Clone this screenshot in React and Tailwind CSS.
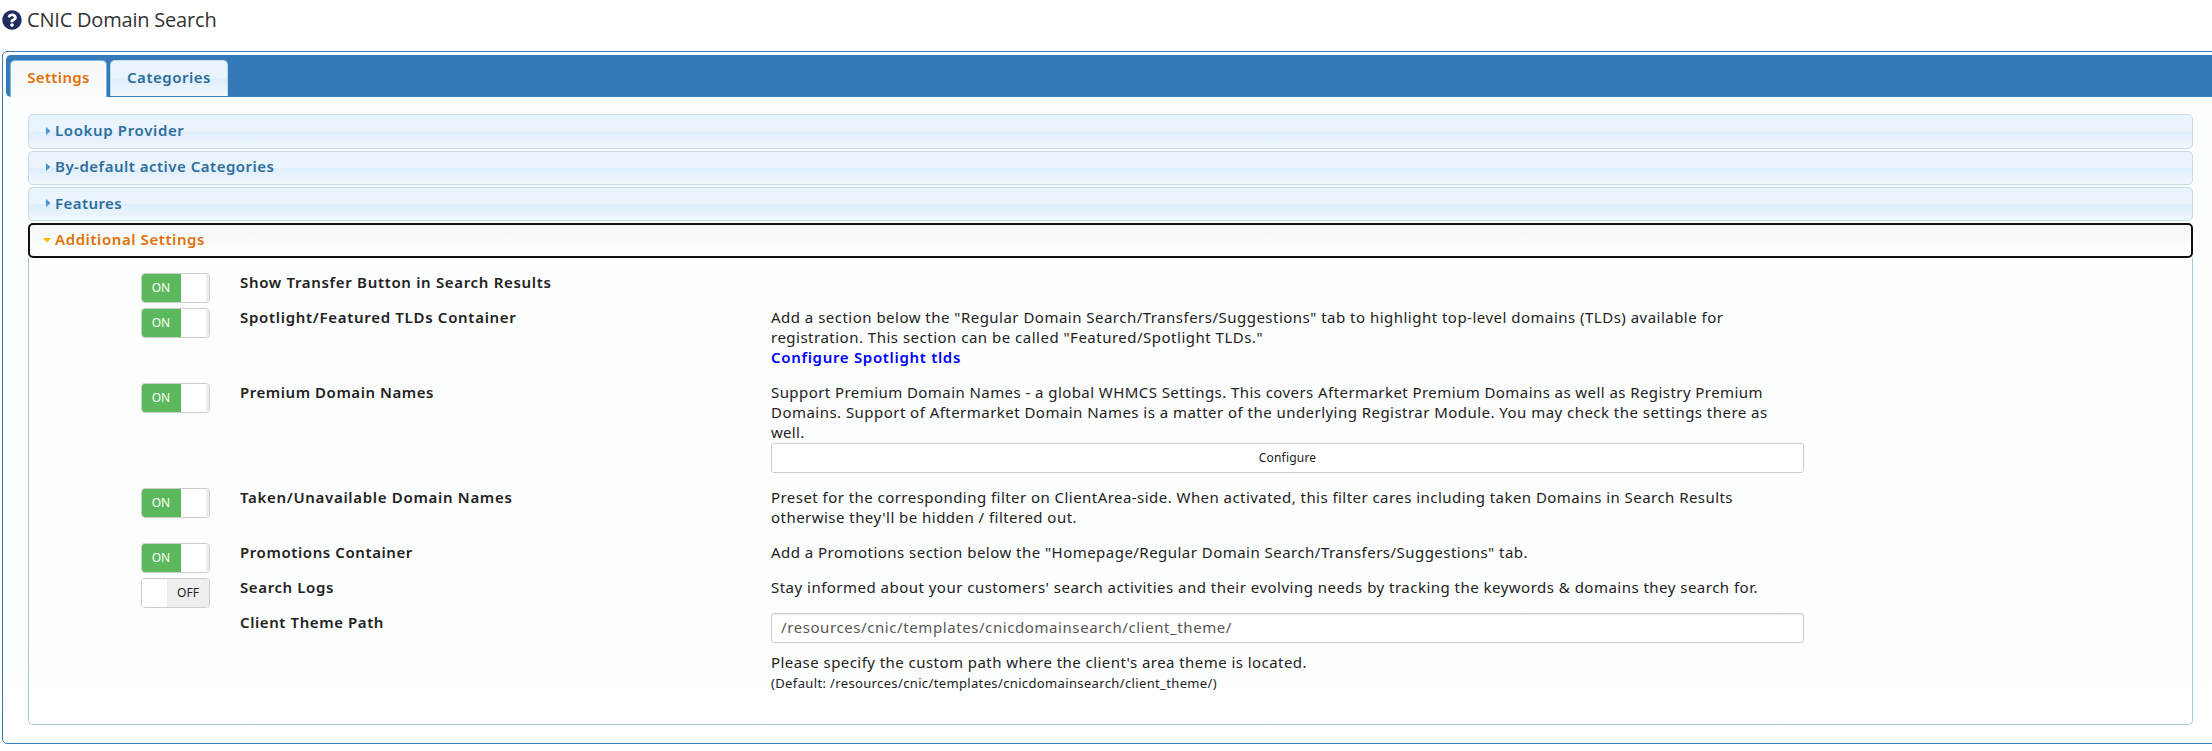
import React from "react";
import { FaQuestionCircle } from "react-icons/fa";

const sections = [
  { title: "Lookup Provider", tracking: "tracking-[0.64px] pb-0.5", box: "h-[35px]" },
  { title: "By-default active Categories", tracking: "tracking-[0.5px] pb-0.5", box: "mt-0.5 h-[34px]" },
  { title: "Features", tracking: "tracking-[0.42px]", box: "mt-0.5 h-[34px]" },
];

const boldText = "text-[15px] leading-5 font-semibold";

function Toggle({ on }) {
  return (
    <div className="flex h-[30px] w-[69px] overflow-hidden rounded border border-[#ccc] bg-white text-xs">
      {on ? (
        <>
          <span className="flex w-[39px] items-center justify-center bg-[#5cb85c] pl-px pr-0.5 text-white">ON</span>
          <span className="w-[25px] bg-white" />
          <span className="flex-1 bg-[#eee]" />
        </>
      ) : (
        <>
          <span className="w-[25px] bg-white" />
          <span className="flex flex-1 items-center justify-center bg-[#eee] text-[#222]">OFF</span>
        </>
      )}
    </div>
  );
}

function Row({ on, label, tracking, height, children }) {
  return (
    <div className={`flex ${height}`}>
      <div className="w-[99px] pt-px">{on === undefined ? null : <Toggle on={on} />}</div>
      <div className={`w-[531px] whitespace-nowrap ${boldText} ${tracking}`}>{label}</div>
      <div className="w-[1033px]">{children}</div>
    </div>
  );
}

function Line({ tracking, children }) {
  return <div className={`whitespace-nowrap text-[15px] leading-5 ${tracking}`}>{children}</div>;
}

export default function App() {
  return (
    <div className="h-[751px] w-[2212px] overflow-hidden bg-white font-['Noto_Sans',sans-serif] text-[#222]">
      <header className="flex h-[51px] items-start gap-[5px] pl-0.5 pt-[9px]">
        <FaQuestionCircle className="mt-px size-5 text-[#202b5e]" />
        <h1 className="font-['Open_Sans',sans-serif] text-xl leading-[22px] tracking-[-0.2px] text-[#333]">
          CNIC Domain Search
        </h1>
      </header>

      <div className="ml-0.5 h-[693px] w-[2220px] rounded-[5px] border border-[#337ab7] bg-linear-to-b from-[#fcfdfd] from-85% to-white p-[3px]">
        <nav className="flex h-[42px] gap-[3px] rounded-[5px] rounded-br-none bg-[#337ab7] pl-1 pt-[5px]">
          <div className="flex h-[37px] w-[97px] justify-center rounded-t-[5px] border border-b-0 border-[#79b7e7] bg-linear-to-b from-[#f5f8f9] to-[#fcfdfd] pt-1.5">
            <span className={`${boldText} tracking-[0.34px] text-[#e17009]`}>Settings</span>
          </div>
          <div className="flex h-9 w-[118px] justify-center rounded-t-[5px] border border-b-0 border-[#c5dbec] bg-[linear-gradient(#eaf4fd_0%,#eaf4fd_48%,#deeefb_52%,#f1f7fd_100%)] pt-1.5">
            <span className={`${boldText} tracking-[0.52px] text-[#2e6e9e]`}>Categories</span>
          </div>
        </nav>

        <div className="w-[2187px] pl-[22px] pt-[17px]">
          {sections.map((s) => (
            <div
              key={s.title}
              className={`flex items-center rounded-[5px] border border-[#c5dbec] bg-[linear-gradient(#eaf4fd_0%,#eaf4fd_49%,#deeefb_52%,#f1f7fd_100%)] pb-0.5 pl-[17px] ${s.box}`}
            >
              <svg className="h-2 w-[5px]" viewBox="0 0 5 8">
                <path d="M0 0 L4.5 4 L0 8 Z" fill="#4297d7" />
              </svg>
              <h3 className={`ml-1 ${boldText} text-[#2e6e9e] ${s.tracking}`}>{s.title}</h3>
            </div>
          ))}
          <div className="mt-0.5 flex h-[35px] items-center rounded-[5px] border-2 border-[#101010] bg-linear-to-b from-[#f4f7f8] to-[#fcfdfd] to-70% pb-px pl-[13px]">
            <svg className="h-[5px] w-2" viewBox="0 0 8 5">
              <path d="M0 0 H8 L4 4.5 Z" fill="#f9bd01" />
            </svg>
            <h3 className={`ml-1 pb-0.5 ${boldText} tracking-[0.58px] text-[#e17009]`}>Additional Settings</h3>
          </div>

          <div className="h-[467px] rounded-b-[5px] border border-t-0 border-[#a6c9e2] bg-linear-to-b from-[#fcfdfd] from-85% to-white pl-28 pt-3.5">
            <Row on label="Show Transfer Button in Search Results" tracking="tracking-[0.676px]" height="h-[35px]" />
            <Row on label="Spotlight/Featured TLDs Container" tracking="tracking-[0.7px]" height="h-[75px]">
              <Line tracking="tracking-[0.483px]">
                Add a section below the "Regular Domain Search/Transfers/Suggestions" tab to highlight top-level domains (TLDs) available for
              </Line>
              <Line tracking="tracking-[0.496px]">registration. This section can be called "Featured/Spotlight TLDs."</Line>
              <a href="#spotlight" className={`block text-[#0000ff] tracking-[0.683px] ${boldText}`}>Configure Spotlight tlds</a>
            </Row>
            <Row on label="Premium Domain Names" tracking="tracking-[0.545px]" height="h-[105px]">
              <Line tracking="tracking-[0.431px]">
                Support Premium Domain Names - a global WHMCS Settings. This covers Aftermarket Premium Domains as well as Registry Premium
              </Line>
              <Line tracking="tracking-[0.463px]">
                Domains. Support of Aftermarket Domain Names is a matter of the underlying Registrar Module. You may check the settings there as
              </Line>
              <Line tracking="tracking-[0.3px]">well.</Line>
              <button className="mt-px block h-[30px] w-full rounded-[3px] border border-[#ccc] bg-white text-xs tracking-[0.2px]">
                Configure
              </button>
            </Row>
            <Row on label="Taken/Unavailable Domain Names" tracking="tracking-[0.692px]" height="h-[55px]">
              <Line tracking="tracking-[0.452px]">
                Preset for the corresponding filter on ClientArea-side. When activated, this filter cares including taken Domains in Search Results
              </Line>
              <Line tracking="tracking-[0.464px]">otherwise they'll be hidden / filtered out.</Line>
            </Row>
            <Row on label="Promotions Container" tracking="tracking-[0.59px]" height="h-[35px]">
              <Line tracking="tracking-[0.469px]">
                Add a Promotions section below the "Homepage/Regular Domain Search/Transfers/Suggestions" tab.
              </Line>
            </Row>
            <Row on={false} label="Search Logs" tracking="tracking-[0.614px]" height="h-[35px]">
              <Line tracking="tracking-[0.482px]">
                Stay informed about your customers' search activities and their evolving needs by tracking the keywords & domains they search for.
              </Line>
            </Row>
            <Row label="Client Theme Path" tracking="tracking-[0.587px]" height="h-[90px]">
              <div className="mt-px mb-[9px] flex h-[30px] items-center rounded-[3px] border border-[#ccc] bg-white pb-0.5 pl-[9px] text-[15px] tracking-[0.583px] text-[#555] shadow-[inset_0_1px_1px_rgba(0,0,0,0.075)]">
                /resources/cnic/templates/cnicdomainsearch/client_theme/
              </div>
              <Line tracking="tracking-[0.447px]">Please specify the custom path where the client's area theme is located.</Line>
              <div className="pt-px text-[13px] leading-5 tracking-[0.36px]">
                (Default: /resources/cnic/templates/cnicdomainsearch/client_theme/)
              </div>
            </Row>
          </div>
        </div>
      </div>
    </div>
  );
}
